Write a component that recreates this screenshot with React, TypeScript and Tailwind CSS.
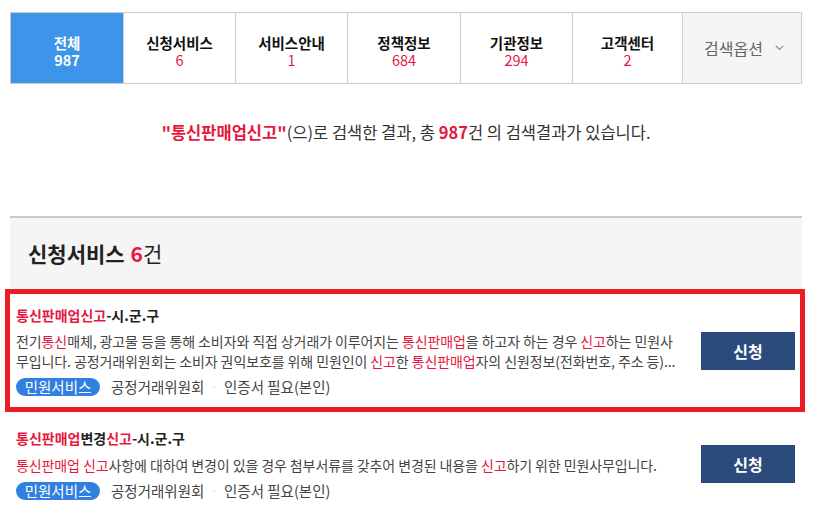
import React from "react";

const R = ({ children }: { children: React.ReactNode }) => (
  <span className="text-[#e8173e]">{children}</span>
);

const tabs = [
  { label: "전체", count: "987", w: "w-[112px]", active: true },
  { label: "신청서비스", count: "6", w: "w-[112px]" },
  { label: "서비스안내", count: "1", w: "w-[112px]" },
  { label: "정책정보", count: "684", w: "w-[113px]" },
  { label: "기관정보", count: "294", w: "w-[112px]" },
  { label: "고객센터", count: "2", w: "w-[110px]" },
];

function Tags() {
  return (
    <div className="mt-[7px] flex h-[18px] items-center text-[14.5px] leading-[18px] text-[#444]">
      <span className="flex h-[18px] w-[84px] items-center justify-center rounded-full bg-[#2f80df] text-[14.5px] text-white">
        민원서비스
      </span>
      <span className="ml-[11px]">공정거래위원회</span>
      <span className="mx-[7px] text-[10px] text-[#ccc]">·</span>
      <span>인증서 필요(본인)</span>
    </div>
  );
}

function ApplyButton() {
  return (
    <button className="flex h-[38px] w-[94px] shrink-0 items-center justify-center bg-[#2a4b7c] text-[16px] font-bold text-white">
      신청
    </button>
  );
}

export default function App() {
  return (
    <div
      className="h-[515px] w-[822px] overflow-hidden bg-white text-[#333]"
      style={{ fontFamily: '"Noto Sans CJK KR", "Noto Sans", sans-serif' }}
    >
      <div className="ml-[10px] w-[792px] pt-[12px]">
        {/* tabs */}
        <div className="flex h-[72px] border border-[#ccc]">
          {tabs.map((t, i) => (
            <div
              key={t.label}
              className={`${t.w} flex flex-col items-center justify-center pt-[6px] ${
                i > 0 ? "border-l border-[#ccc]" : ""
              } ${t.active ? "bg-[#3d95e9] text-white" : "bg-white text-[#111]"}`}
            >
              <div className="text-[14.5px] font-bold leading-[17px]">
                {t.label}
              </div>
              <div
                className={`text-[14.5px] leading-[17px] ${
                  t.active ? "font-bold text-white" : "text-[#e8173e]"
                }`}
              >
                {t.count}
              </div>
            </div>
          ))}
          <div className="flex w-[119px] items-center justify-center gap-[12px] border-l border-[#ccc] bg-[#f5f5f5] pl-[4px] text-[16px] text-[#666]">
            <span>검색옵션</span>
            <svg width="9" height="6" viewBox="0 0 9 6" fill="none">
              <path d="M0.8 0.8 L4.5 4.5 L8.2 0.8" stroke="#888" strokeWidth="1.2" />
            </svg>
          </div>
        </div>

        {/* message */}
        <div className="flex h-[96px] items-center justify-center text-[16.5px] text-[#333]">
          <span>
            <span className="font-bold text-[#e8173e]">"통신판매업신고"</span>
            (으)로 검색한 결과, 총{" "}
            <span className="font-bold text-[#e8173e]">987</span>건 의 검색결과가 있습니다.
          </span>
        </div>

        {/* section */}
        <div className="mt-[36px]">
          <div className="flex h-[73px] items-center border-t-2 border-[#ccc] bg-[#f5f5f5] pl-[18px] text-[21px] text-[#222]">
            <span className="font-bold">신청서비스</span>
            <span className="ml-[6px] font-bold text-[#e8173e]">6</span>
            <span>건</span>
          </div>

          {/* item 1 */}
          <div className="relative flex items-center justify-between py-[16px] pl-[6px] pr-[7px]">
            <div>
              <div className="text-[14px] font-bold leading-[20px] text-[#222]">
                <R>통신판매업신고</R>-시.군.구
              </div>
              <div className="mt-[6px] whitespace-nowrap text-[14px] leading-[20px] tracking-[-0.1px] text-[#444]">
                <div>
                  전기<R>통신</R>매체, 광고물 등을 통해 소비자와 직접 상거래가 이루어지는{" "}
                  <R>통신판매업</R>을 하고자 하는 경우 <R>신고</R>하는 민원사
                </div>
                <div>
                  무입니다. 공정거래위원회는 소비자 권익보호를 위해 민원인이 <R>신고</R>한{" "}
                  <R>통신판매업</R>자의 신원정보(전화번호, 주소 등)...
                </div>
              </div>
              <Tags />
            </div>
            <ApplyButton />
            <div className="pointer-events-none absolute -left-[5px] -right-[3px] top-0 bottom-0 border-[5px] border-[#ec1c24]" />
          </div>

          {/* item 2 */}
          <div className="flex items-center justify-between py-[16px] pl-[6px] pr-[7px]">
            <div>
              <div className="text-[14px] font-bold leading-[20px] text-[#222]">
                <R>통신판매업</R>변경<R>신고</R>-시.군.구
              </div>
              <div className="mt-[7px] whitespace-nowrap text-[14px] leading-[20px] tracking-[-0.1px] text-[#444]">
                <R>통신판매업 신고</R>사항에 대하여 변경이 있을 경우 첨부서류를 갖추어 변경된 내용을{" "}
                <R>신고</R>하기 위한 민원사무입니다.
              </div>
              <Tags />
            </div>
            <ApplyButton />
          </div>
        </div>
      </div>
    </div>
  );
}
